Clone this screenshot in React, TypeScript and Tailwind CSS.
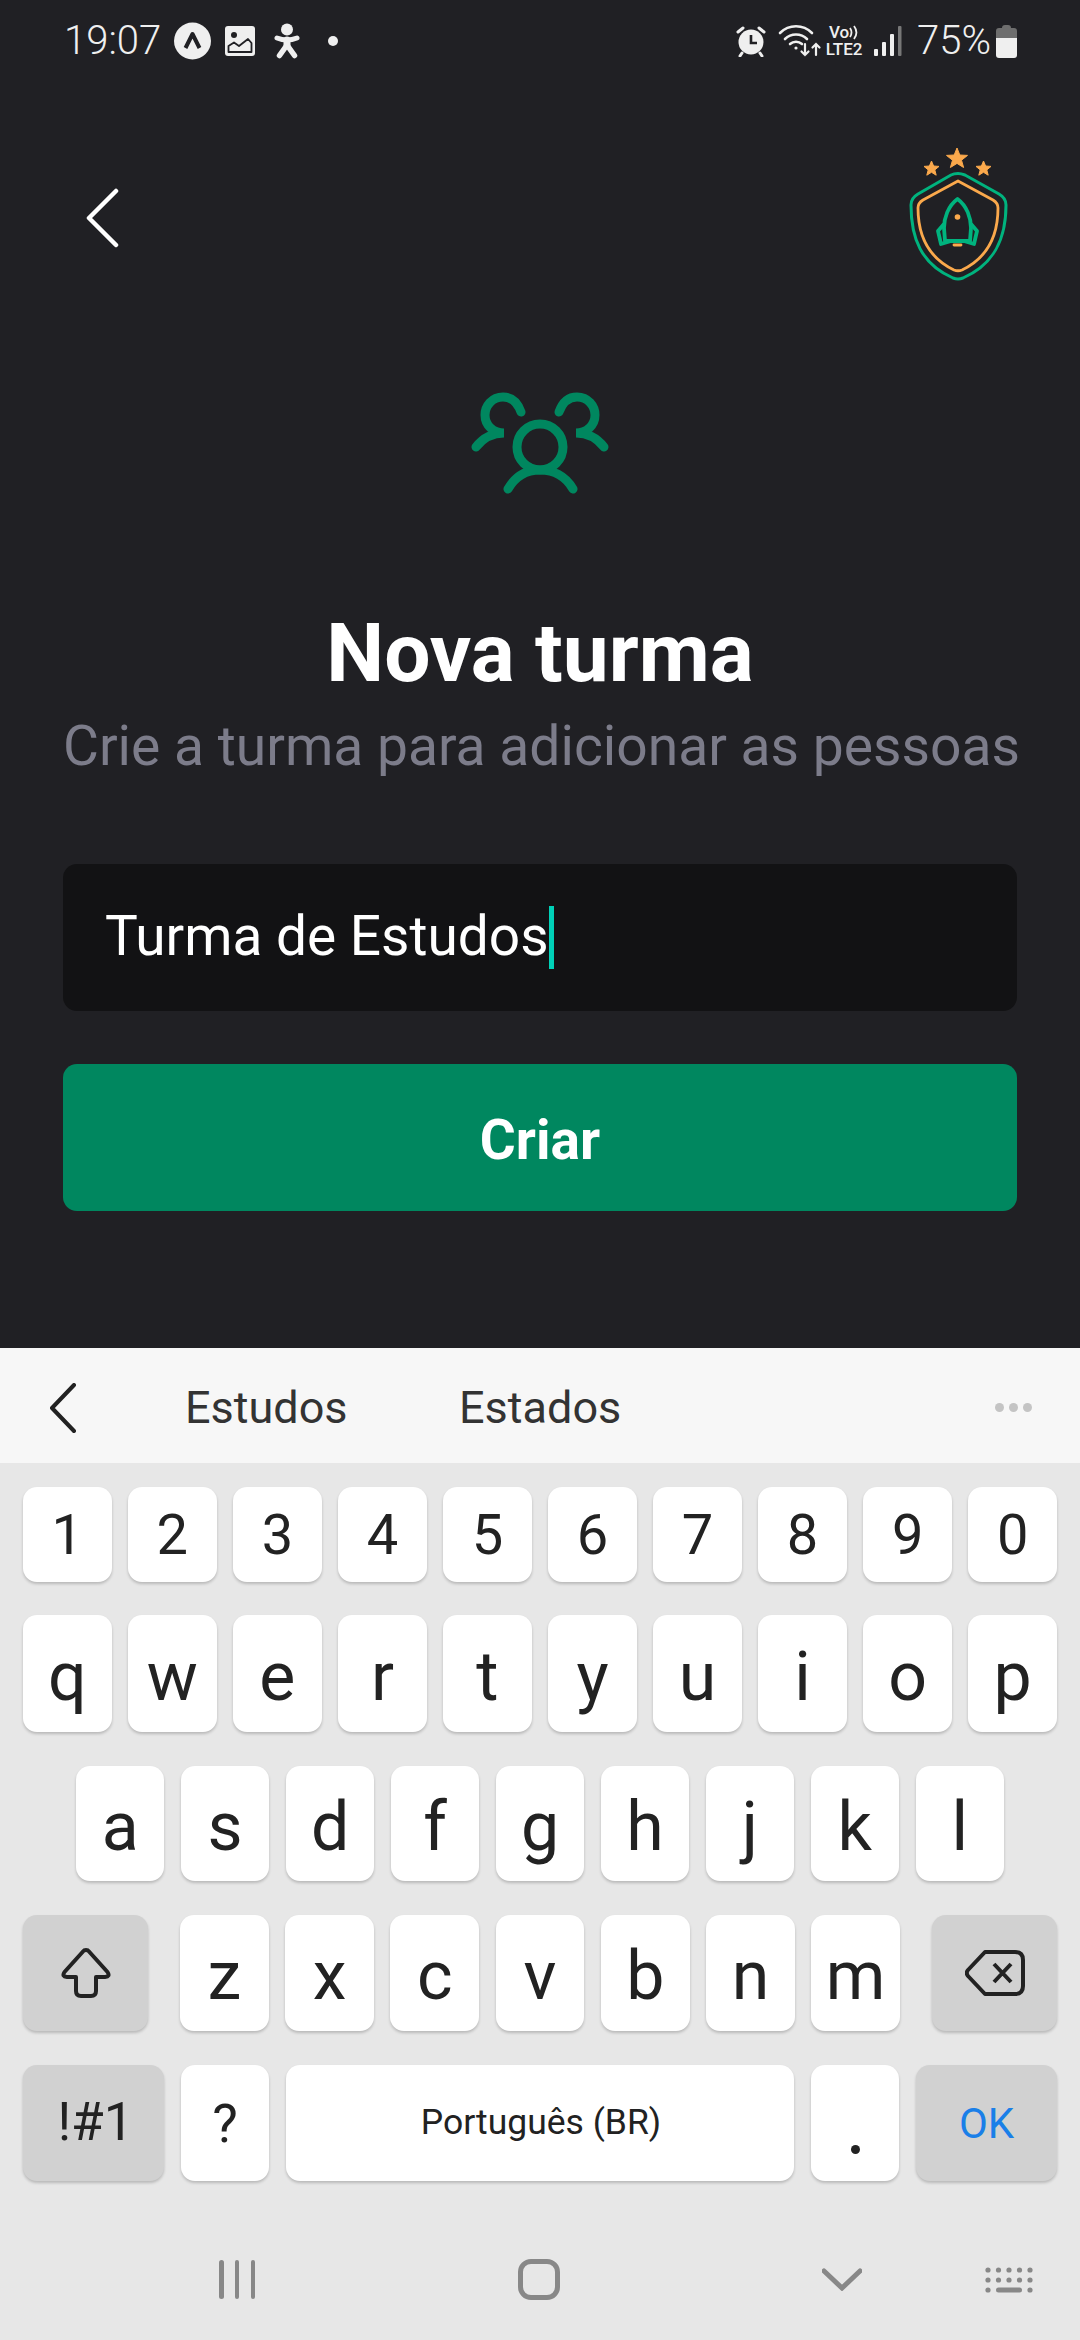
const digits = ["1", "2", "3", "4", "5", "6", "7", "8", "9", "0"];
const row1 = ["q", "w", "e", "r", "t", "y", "u", "i", "o", "p"];
const row2 = ["a", "s", "d", "f", "g", "h", "j", "k", "l"];
const row3 = ["z", "x", "c", "v", "b", "n", "m"];

const keyClass =
  "flex items-center justify-center rounded-[14px] bg-white text-[#222222] shadow-[0_2px_3px_rgba(0,0,0,0.2)]";
const grayKeyClass =
  "flex items-center justify-center rounded-[14px] bg-[#d1d1d1] shadow-[0_2px_3px_rgba(0,0,0,0.2)]";

function StatusLeftIcons() {
  return (
    <div className="ml-[13px] flex items-center">
      <svg width="37" height="38" viewBox="0 0 37 38">
        <circle cx="18.5" cy="19" r="18.5" fill="#efefef" />
        <path d="M11.5 26 L18.5 12 L25.5 26" fill="none" stroke="#202024" strokeWidth="4" strokeLinejoin="round" />
      </svg>
      <svg className="ml-[14px]" width="30" height="30" viewBox="0 0 30 30">
        <rect width="30" height="30" rx="3" fill="#efefef" />
        <circle cx="9" cy="9" r="3" fill="#202024" />
        <path d="M3.5 26 V20 L9 16.5 L14 20 L23 13 L26.5 17 V26 Z" fill="#efefef" stroke="#202024" strokeWidth="1.8" strokeLinejoin="round" />
      </svg>
      <svg className="ml-[19px]" width="26" height="36" viewBox="0 0 26 36" fill="none" stroke="#efefef" strokeLinecap="round" strokeLinejoin="round">
        <circle cx="13" cy="6.5" r="6" fill="#efefef" stroke="none" />
        <path d="M3 15 Q13 19 23 15" strokeWidth="5" />
        <path d="M13 17 V22" strokeWidth="7" />
        <path d="M13 22 L5.5 32.5 M13 22 L20.5 32.5" strokeWidth="5.5" />
      </svg>
      <div className="ml-[28px] h-[10px] w-[10px] rounded-full bg-[#efefef]" />
    </div>
  );
}

function StatusRightIcons() {
  return (
    <div className="flex items-center">
      <svg width="30" height="32" viewBox="0 0 30 32">
        <circle cx="15" cy="17" r="12.5" fill="#efefef" />
        <path d="M15 10 V18 H21" fill="none" stroke="#202024" strokeWidth="2.6" />
        <path d="M2 7 L7 3 M28 7 L23 3 M6 28 L4 31 M24 28 L26 31" stroke="#efefef" strokeWidth="3" strokeLinecap="round" />
      </svg>
      <svg className="ml-[12px]" width="44" height="34" viewBox="0 0 44 34" fill="none" stroke="#efefef" strokeLinecap="round">
        <path d="M2 9 C11 0 25 0 34 9" strokeWidth="2.6" />
        <path d="M7 15 C13 9 23 9 29 15" strokeWidth="2.6" />
        <path d="M12 20 C15.5 17 20.5 17 24 20" strokeWidth="2.6" />
        <circle cx="18" cy="24" r="1.6" fill="#efefef" stroke="none" />
        <path d="M27 20 V31 M23.5 27.5 L27 31 L30.5 27.5" strokeWidth="2.2" />
        <path d="M38 31 V20 M34.5 23.5 L38 20 L41.5 23.5" strokeWidth="2.2" />
      </svg>
      <div className="ml-[1px] flex w-[42px] flex-col items-center text-[17px] font-medium leading-[17px] text-[#efefef]">
        <span className="flex items-center">
          Vo
          <svg width="10" height="15" viewBox="0 0 10 15" fill="none" stroke="#efefef" strokeWidth="1.8">
            <path d="M1 3 C3 6 3 9 1 12 M5 1 C8 5 8 10 5 14" />
          </svg>
        </span>
        <span>LTE2</span>
      </div>
      <svg className="ml-[9px]" width="28" height="30" viewBox="0 0 28 30">
        <rect x="0" y="23" width="4" height="7" rx="1" fill="#efefef" />
        <rect x="8" y="16" width="4" height="14" rx="1" fill="#efefef" />
        <rect x="16" y="8" width="4" height="22" rx="1" fill="#efefef" />
        <rect x="24" y="0" width="3.5" height="30" rx="1" fill="#777777" />
      </svg>
      <span className="ml-[15px] text-[40px] font-light leading-none text-[#efefef]">75%</span>
      <svg className="ml-[5px]" width="21" height="33" viewBox="0 0 21 33">
        <path d="M6 3 Q6 0 9 0 H12 Q15 0 15 3 H18 Q21 3 21 6 V13 H0 V6 Q0 3 3 3 Z" fill="#6e6e6e" />
        <path d="M0 13 H21 V30 Q21 33 18 33 H3 Q0 33 0 30 Z" fill="#efefef" />
      </svg>
    </div>
  );
}

function Logo() {
  return (
    <svg width="180" height="170" viewBox="0 0 180 170" fill="none">
      <path d="M97 45.5 Q93 45.5 90 47 L57 66 Q50 70 50 77 C50 110 60 136 92 150 Q97 152 102 150 C134 136 145 110 145 77 Q145 70 138 66 L104 47 Q100 45.5 97 45.5 Z" stroke="#00B37E" strokeWidth="3" />
      <path d="M97 53 L62 72 Q57 75 57 80 C57 108 68 130 93 142 Q97 143.5 101 142 C126 130 137 108 137 80 Q137 75 132 72 L97 53 Z" stroke="#FBA94C" strokeWidth="2.8" strokeLinejoin="round" />
      <path d="M96.5 71 C87 78 83 90 83 100 L84 113 H109 L110 100 C110 90 106 78 96.5 71 Z" stroke="#00B37E" strokeWidth="3.8" strokeLinejoin="round" />
      <path d="M83 96 L77 103 L80 116 L90 113 M110 96 L116 103 L113 116 L103 113" stroke="#00B37E" strokeWidth="3.8" strokeLinejoin="round" />
      <circle cx="96.5" cy="89" r="2.8" fill="#FBA94C" />
      <path d="M93 117 H100" stroke="#FBA94C" strokeWidth="2.8" strokeLinecap="round" />
      <path d="M96 20 L98.8 27 L106.5 27.4 L100.5 32.2 L102.6 39.5 L96 35.4 L89.4 39.5 L91.5 32.2 L85.5 27.4 L93.2 27 Z" fill="#FBA94C" stroke="#FBA94C" strokeLinejoin="round" />
      <path d="M70.5 33 L72.6 38 L78 38.4 L73.8 41.9 L75.2 47.2 L70.5 44.3 L65.8 47.2 L67.2 41.9 L63 38.4 L68.4 38 Z" fill="#FBA94C" stroke="#FBA94C" strokeLinejoin="round" />
      <path d="M122.5 33 L124.6 38 L130 38.4 L125.8 41.9 L127.2 47.2 L122.5 44.3 L117.8 47.2 L119.2 41.9 L115 38.4 L120.4 38 Z" fill="#FBA94C" stroke="#FBA94C" strokeLinejoin="round" />
    </svg>
  );
}

function UsersIcon() {
  return (
    <svg width="200" height="130" viewBox="0 0 200 130" fill="none" stroke="#00875F" strokeWidth="9" strokeLinecap="round">
      <circle cx="100" cy="77" r="23" />
      <path d="M68 119 C76 105 88 100 100 100 C112 100 125 105 133 119" />
      <path d="M81 42 C77 31 70 27 63 27 C52 27 45 36 45 45 C45 56 54 63 64 63 C52 63 43 68 36 77" />
      <path d="M119 42 C123 31 130 27 137 27 C148 27 155 36 155 45 C155 56 146 63 136 63 C148 63 157 68 164 77" />
    </svg>
  );
}

function ShiftIcon() {
  return (
    <svg width="50" height="50" viewBox="0 0 50 50" fill="none" stroke="#222222" strokeWidth="4" strokeLinejoin="round">
      <path d="M25 2 Q23 2 22 3.5 L3.5 24 Q0.5 28.5 6 29 H15 V43 Q15 48 20 48 H30 Q35 48 35 43 V29 H44 Q49.5 28.5 46.5 24 L28 3.5 Q27 2 25 2 Z" />
    </svg>
  );
}

function DeleteIcon() {
  return (
    <svg width="60" height="46" viewBox="0 0 60 46" fill="none" stroke="#222222" strokeLinejoin="round">
      <path d="M20 2 H50 Q58 2 58 10 V36 Q58 44 50 44 H20 L3 26 Q0.5 23 3 20 Z" strokeWidth="4" />
      <path d="M29 14 L46 32 M46 14 L29 32" strokeWidth="4" />
    </svg>
  );
}

export default function App() {
  return (
    <div className="flex h-[2340px] w-[1080px] flex-col overflow-hidden bg-[#202024] font-['Roboto',sans-serif]">
      <div className="flex h-[82px] items-center justify-between pl-[64px] pr-[63px]">
        <div className="flex items-center">
          <span className="text-[40px] font-light leading-none text-[#efefef]">19:07</span>
          <StatusLeftIcons />
        </div>
        <StatusRightIcons />
      </div>

      <div className="relative h-[120px]">
        <svg className="absolute left-[85px] top-[106px]" width="34" height="60" viewBox="0 0 34 60" fill="none" stroke="#ffffff" strokeWidth="4.5" strokeLinecap="round" strokeLinejoin="round">
          <path d="M31 3 L4 30 L31 57" />
        </svg>
        <div className="absolute left-[861px] top-[46px]">
          <Logo />
        </div>
      </div>

      <div className="flex flex-1 flex-col px-[63px]">
        <div className="mt-[168px] flex justify-center">
          <UsersIcon />
        </div>
        <h1 className="mt-[108px] text-center text-[82px] font-bold leading-[90px] text-white">Nova turma</h1>
        <p className="mt-[18px] whitespace-nowrap text-center text-[55.2px] leading-[60px] text-[#7C7C8A]">Crie a turma para adicionar as pessoas</p>
        <div className="mt-[88px] flex h-[147px] items-center rounded-[14px] bg-[#121214] pl-[42px]">
          <span className="pb-[2px] text-[55px] leading-none text-white">Turma de Estudos</span>
          <span className="h-[63px] w-[5px] bg-[#00D1B8]" />
        </div>
        <button className="mt-[53px] flex h-[147px] items-center justify-center rounded-[14px] bg-[#00875F] pt-[5px] text-[55px] font-bold text-white">
          Criar
        </button>
      </div>

      <div className="flex h-[992px] flex-col bg-[#e7e7e7]">
        <div className="flex h-[115px] items-center bg-[#f7f7f7] pt-[4px] text-[45px] text-[#333333]">
          <svg className="ml-[49px]" width="28" height="50" viewBox="0 0 28 50" fill="none" stroke="#222222" strokeWidth="4" strokeLinecap="round" strokeLinejoin="round">
            <path d="M25 2 L3 25 L25 48" />
          </svg>
          <span className="ml-[108px] w-[162px] text-center">Estudos</span>
          <span className="ml-[112px] w-[161px] text-center">Estados</span>
          <div className="ml-[375px] flex gap-[5px]">
            <span className="h-[9px] w-[9px] rounded-full bg-[#c4c4c4]" />
            <span className="h-[9px] w-[9px] rounded-full bg-[#c4c4c4]" />
            <span className="h-[9px] w-[9px] rounded-full bg-[#c4c4c4]" />
          </div>
        </div>

        <div className="mt-[24px] flex h-[95px] gap-[16.5px] px-[23px]">
          {digits.map((k) => (
            <div key={k} className={`${keyClass} flex-1 text-[56px]`}>{k}</div>
          ))}
        </div>
        <div className="mt-[33px] flex h-[117px] gap-[16.5px] px-[23px]">
          {row1.map((k) => (
            <div key={k} className={`${keyClass} flex-1 pt-[6px] text-[68px]`}>{k}</div>
          ))}
        </div>
        <div className="mt-[34px] flex h-[115px] gap-[16.5px] px-[76px]">
          {row2.map((k) => (
            <div key={k} className={`${keyClass} flex-1 pt-[6px] text-[68px]`}>{k}</div>
          ))}
        </div>
        <div className="mt-[34px] flex h-[116px] px-[23px]">
          <div className={`${grayKeyClass} w-[125px]`}><ShiftIcon /></div>
          <div className="ml-[32px] flex flex-1 gap-[16.5px]">
            {row3.map((k) => (
              <div key={k} className={`${keyClass} flex-1 pt-[6px] text-[68px]`}>{k}</div>
            ))}
          </div>
          <div className={`${grayKeyClass} ml-[32px] w-[125px]`}><DeleteIcon /></div>
        </div>
        <div className="mt-[34px] flex h-[116px] gap-[17px] px-[23px]">
          <div className={`${grayKeyClass} w-[141px] pl-[4px] text-[53px] text-[#222222]`}>!#1</div>
          <div className={`${keyClass} w-[88px] text-[54px]`}>?</div>
          <div className={`${keyClass} flex-1 pl-[2px] text-[35.5px]`}>Português (BR)</div>
          <div className={`${keyClass} w-[88px] items-end pb-[27px]`}>
            <span className="h-[9px] w-[9px] rounded-full bg-[#222222]" />
          </div>
          <div className={`${grayKeyClass} w-[141px] text-[42px] text-[#1a7fe8]`}>OK</div>
        </div>

        <div className="mt-[78px] flex items-center">
          <div className="ml-[219px] flex h-[39px] w-[36px] justify-between">
            <span className="w-[4.5px] rounded bg-[#888888]" />
            <span className="w-[4.5px] rounded bg-[#888888]" />
            <span className="w-[4.5px] rounded bg-[#888888]" />
          </div>
          <div className="ml-[263px] h-[41px] w-[42px] rounded-[13px] border-[5px] border-[#888888]" />
          <svg className="ml-[262px]" width="40" height="23" viewBox="0 0 40 23" fill="none" stroke="#888888" strokeWidth="5" strokeLinecap="round">
            <path d="M2 3 L20 20 L38 3" />
          </svg>
          <svg className="ml-[123px]" width="48" height="26" viewBox="0 0 48 26" fill="#888888">
            <circle cx="3" cy="3" r="2.6" /><circle cx="13.5" cy="3" r="2.6" /><circle cx="24" cy="3" r="2.6" /><circle cx="34.5" cy="3" r="2.6" /><circle cx="45" cy="3" r="2.6" />
            <circle cx="3" cy="13" r="2.6" /><circle cx="13.5" cy="13" r="2.6" /><circle cx="24" cy="13" r="2.6" /><circle cx="34.5" cy="13" r="2.6" /><circle cx="45" cy="13" r="2.6" />
            <circle cx="3" cy="23" r="2.6" /><rect x="11" y="20.5" width="26" height="5" rx="2.5" /><circle cx="45" cy="23" r="2.6" />
          </svg>
        </div>
      </div>
    </div>
  );
}
